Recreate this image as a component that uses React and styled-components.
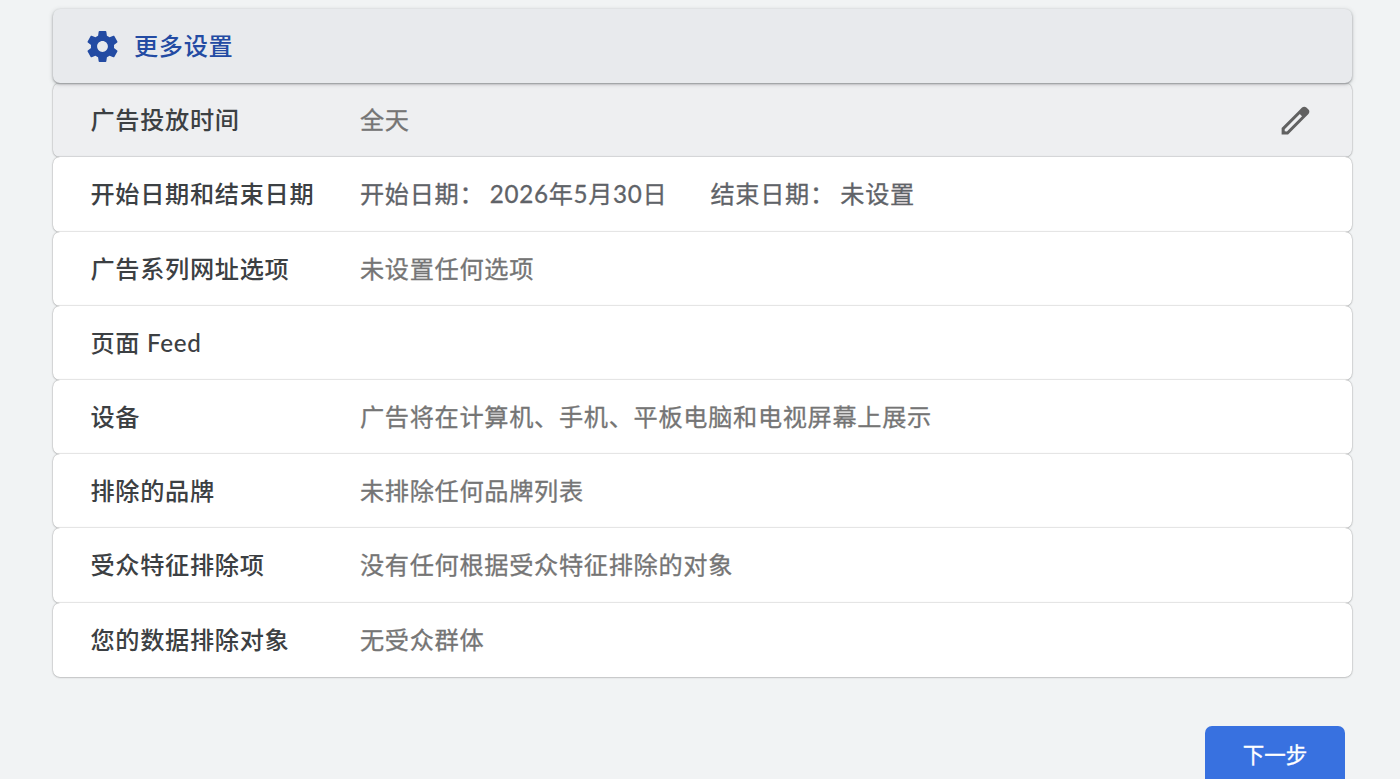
import React from "react";
import styled, { createGlobalStyle } from "styled-components";

const rows = [
  { label: "广告投放时间", value: "全天", active: true },
  {
    label: "开始日期和结束日期",
    dates: [
      { name: "开始日期：", value: "2026年5月30日" },
      { name: "结束日期：", value: "未设置" },
    ],
  },
  { label: "广告系列网址选项", value: "未设置任何选项" },
  { label: "页面 Feed", value: "" },
  { label: "设备", value: "广告将在计算机、手机、平板电脑和电视屏幕上展示" },
  { label: "排除的品牌", value: "未排除任何品牌列表" },
  { label: "受众特征排除项", value: "没有任何根据受众特征排除的对象" },
  { label: "您的数据排除对象", value: "无受众群体" },
];

function App() {
  return (
    <Page>
      <GlobalStyle />
      <Header>
        <GearIcon viewBox="0 0 24 24">
          <path d="M19.43 12.98c.04-.32.07-.64.07-.98s-.03-.66-.07-.98l2.11-1.65c.19-.15.24-.42.12-.64l-2-3.46c-.12-.22-.39-.3-.61-.22l-2.49 1c-.52-.4-1.08-.73-1.69-.98l-.38-2.65C14.46 2.18 14.25 2 14 2h-4c-.25 0-.46.18-.49.42l-.38 2.65c-.61.25-1.17.59-1.69.98l-2.49-1c-.23-.09-.49 0-.61.22l-2 3.46c-.13.22-.07.49.12.64l2.11 1.65c-.04.32-.07.65-.07.98s.03.66.07.98l-2.11 1.65c-.19.15-.24.42-.12.64l2 3.46c.12.22.39.3.61.22l2.49-1c.52.4 1.08.73 1.69.98l.38 2.65c.03.24.24.42.49.42h4c.25 0 .46-.18.49-.42l.38-2.65c.61-.25 1.17-.59 1.69-.98l2.49 1c.23.09.49 0 .61-.22l2-3.46c.12-.22.07-.49-.12-.64l-2.11-1.65zM12 15.5c-1.93 0-3.5-1.57-3.5-3.5s1.57-3.5 3.5-3.5 3.5 1.57 3.5 3.5-1.57 3.5-3.5 3.5z" />
        </GearIcon>
        <Title>更多设置</Title>
      </Header>
      {rows.map((row) => (
        <Row key={row.label} $active={row.active}>
          <Label>{row.label}</Label>
          {row.dates ? (
            <Dates>
              {row.dates.map((date) => (
                <DateItem key={date.name}>
                  <DateName>{date.name}</DateName>
                  <span>{date.value}</span>
                </DateItem>
              ))}
            </Dates>
          ) : (
            <Value>{row.value}</Value>
          )}
          {row.active && (
            <EditIcon viewBox="0 0 24 24">
              <path d="M20.41 4.94l-1.35-1.35c-.78-.78-2.05-.78-2.83 0L13.4 6.41 3 16.82V21h4.18l10.46-10.46 2.77-2.77c.79-.78.79-2.05 0-2.83zm-14 14.12L5 19v-1.36l9.82-9.82 1.41 1.41-9.82 9.83z" />
            </EditIcon>
          )}
        </Row>
      ))}
      <Footer>
        <NextButton>下一步</NextButton>
      </Footer>
    </Page>
  );
}

export default App;

const GlobalStyle = createGlobalStyle`
  * {
    box-sizing: border-box;
  }

  body {
    margin: 0;
    overflow: hidden;
    background-color: #f1f3f4;
    font-family: Lato, "Noto Sans CJK SC", sans-serif;
    font-size: 24.2px;
    letter-spacing: 0.68px;
  }
`;

const Page = styled.div`
  height: 779px;
  overflow: hidden;
  padding: 9px 48px 0 53px;
`;

const Header = styled.div`
  position: relative;
  z-index: 1;
  display: flex;
  align-items: center;
  height: 74.2px;
  padding-left: 31px;
  border-radius: 7px;
  background-color: #e8eaed;
  box-shadow: 0 1px 2px rgba(60, 64, 67, 0.45),
    0 1px 5px rgba(60, 64, 67, 0.22);
`;

const GearIcon = styled.svg`
  width: 37px;
  height: 37px;
  fill: #234ba3;
`;

const Title = styled.div`
  margin-left: 13px;
  padding-bottom: 3px;
  color: #234ba3;
  font-weight: 500;
`;

const Row = styled.div`
  display: flex;
  align-items: center;
  height: 74.2px;
  padding: 0 38px;
  border-radius: 7px;
  background-color: ${(props) => (props.$active ? "#eeeff1" : "#fff")};
  box-shadow: 0 0 0 0.5px rgba(0, 0, 0, 0.06), 0 0 2px rgba(0, 0, 0, 0.28),
    0 1px 2px rgba(0, 0, 0, 0.1);
`;

const Label = styled.div`
  width: 269.5px;
  margin-left: -0.5px;
  padding-bottom: 3px;
  color: #3c4043;
  font-weight: 500;
`;

const Value = styled.div`
  flex: 1;
  padding-bottom: 3px;
  color: #757575;
  -webkit-text-stroke: 0.3px #757575;
`;

const Dates = styled.div`
  display: flex;
  padding-bottom: 3px;
  color: #5f6368;
  -webkit-text-stroke: 0.3px #5f6368;
`;

const DateItem = styled.div`
  display: flex;
  margin-right: 43px;
`;

const DateName = styled.span`
  margin-right: 5.5px;
`;

const EditIcon = styled.svg`
  width: 37px;
  height: 37px;
  fill: #616161;
`;

const Footer = styled.div`
  display: flex;
  justify-content: flex-end;
  padding: 49.3px 7px 0 0;
`;

const NextButton = styled.button`
  width: 140px;
  height: 62px;
  padding-bottom: 8px;
  border: none;
  border-radius: 7px;
  background-color: #3871e0;
  color: #fff;
  font-family: inherit;
  font-size: 21.5px;
  letter-spacing: 0;
  -webkit-text-stroke: 0.3px #fff;
`;
